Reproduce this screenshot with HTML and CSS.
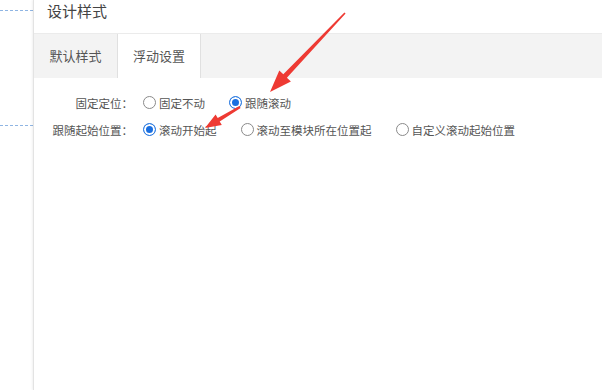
FILE: index.html
```html
<!DOCTYPE html>
<html lang="zh">
<head>
<meta charset="utf-8">
<link rel="stylesheet" href="styles.css">
</head>
<body>
<div class="page">
  <div class="gutter">
    <div class="guide guide-top"></div>
    <div class="guide guide-mid"></div>
  </div>
  <div class="panel">
    <div class="title">设计样式</div>
    <div class="tabs">
      <div class="tab">默认样式</div>
      <div class="tab active">浮动设置</div>
    </div>
    <div class="form">
      <div class="row">
        <div class="label">固定定位：</div>
        <div class="options">
          <label class="opt"><span class="radio"></span>固定不动</label>
          <label class="opt"><span class="radio checked"></span>跟随滚动</label>
        </div>
      </div>
      <div class="row">
        <div class="label">跟随起始位置：</div>
        <div class="options">
          <label class="opt"><span class="radio checked"></span>滚动开始起</label>
          <label class="opt"><span class="radio"></span>滚动至模块所在位置起</label>
          <label class="opt"><span class="radio"></span>自定义滚动起始位置</label>
        </div>
      </div>
    </div>
  </div>
  <svg class="arrows" width="602" height="390" viewBox="0 0 602 390">
    <polygon fill="#ee3a33" points="345.6,13.4 286.9,77.8 290.9,81.6 270,92 279.3,70.5 283.3,74.3 344.4,12.6"/>
    <polygon fill="#ee3a33" points="240.6,107.9 219.7,121.5 221.8,124.9 205,128 215.6,114.6 217.7,118.1 239.4,106.1"/>
  </svg>
</div>
</body>
</html>
```
FILE: styles.css
```css
html, body {
  margin: 0;
  padding: 0;
  background: #fff;
}
body {
  font-family: "Noto Sans CJK SC", "Noto Sans", sans-serif;
  color: #333;
}
.page {
  position: relative;
  display: flex;
  width: 602px;
  height: 390px;
  overflow: hidden;
}
.gutter {
  width: 33px;
  flex: none;
  display: flex;
  flex-direction: column;
}
.guide {
  border-top: 1px dashed #8fb5e3;
  width: 33px;
}
.guide-top {
  margin-top: 10px;
}
.guide-mid {
  margin-top: 114px;
}
.panel {
  flex: 1;
  border-left: 1px solid #e3e3e3;
  box-shadow: -1px 0 2px rgba(0, 0, 0, 0.06);
  display: flex;
  flex-direction: column;
}
.title {
  height: 22px;
  line-height: 22px;
  padding: 0 0 11px 13px;
  font-size: 15px;
  color: #444;
}
.tabs {
  display: flex;
  height: 44px;
  background: #f3f3f3;
  border-top: 1px solid #ebebeb;
}
.tab {
  width: 83px;
  text-align: center;
  line-height: 44px;
  font-size: 13px;
  color: #555;
  box-sizing: border-box;
}
.tab.active {
  width: 84px;
  background: #fff;
  border-left: 1px solid #e0e0e0;
  border-right: 1px solid #e0e0e0;
}
.form {
  padding-top: 11px;
}
.row {
  display: flex;
  align-items: center;
  height: 27px;
  font-size: 11.5px;
  color: #555;
}
.label {
  width: 99px;
  text-align: right;
  white-space: nowrap;
  padding-right: 10px;
}
.options {
  display: flex;
  align-items: center;
}
.opt {
  display: flex;
  align-items: center;
  margin-right: 24px;
  white-space: nowrap;
}
.radio {
  width: 11px;
  height: 11px;
  border: 1px solid #8a8a8a;
  border-radius: 50%;
  margin-right: 3px;
  box-sizing: content-box;
  background: #fff;
}
.radio.checked {
  border-color: #2f7de1;
  background: #1a6fe0;
  box-shadow: inset 0 0 0 2px #fff;
}
.arrows {
  position: absolute;
  left: 0;
  top: 0;
  pointer-events: none;
}
```
